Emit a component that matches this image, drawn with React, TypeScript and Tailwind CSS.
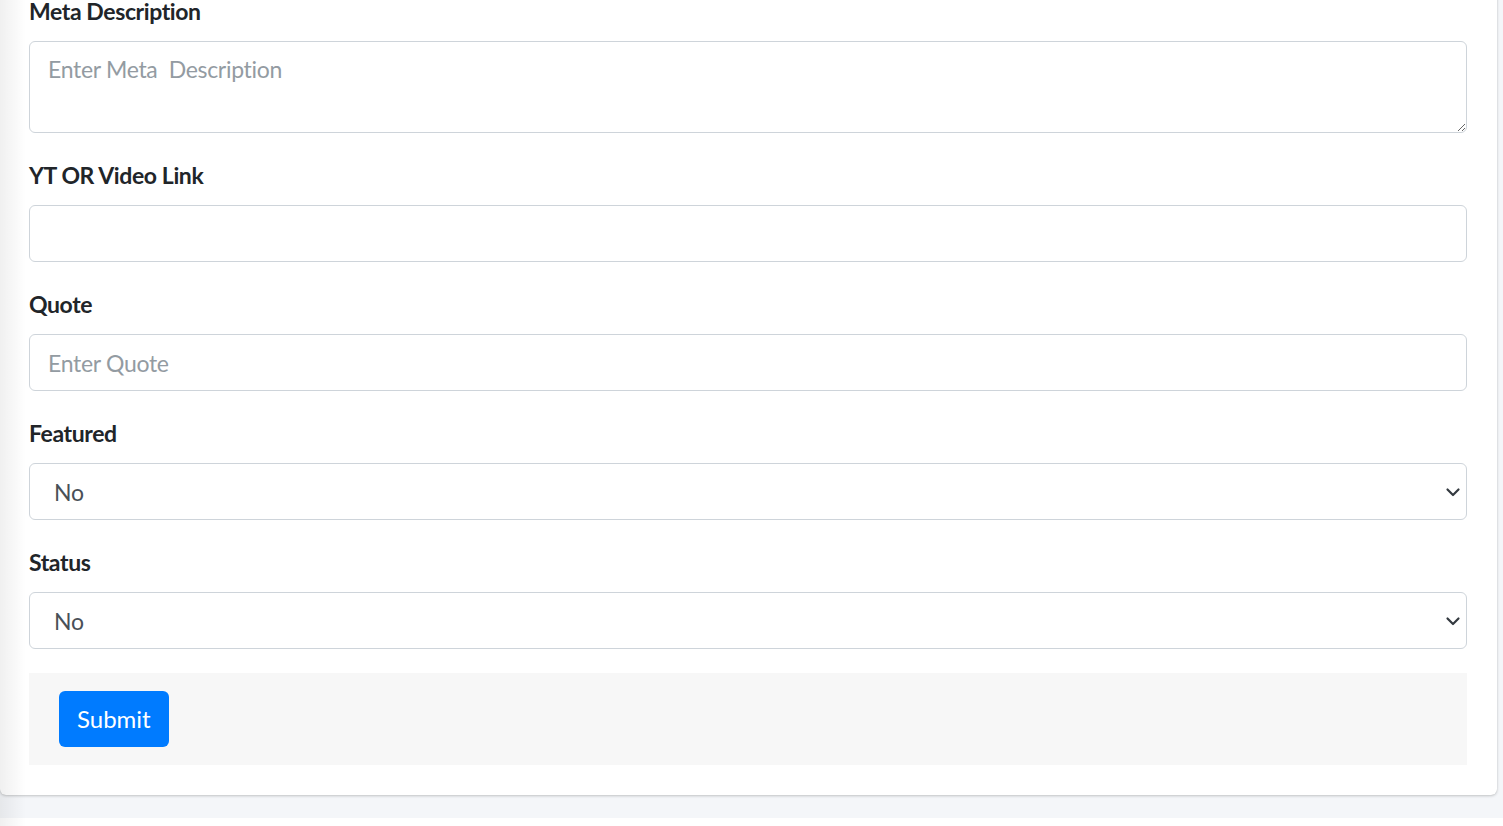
const font = { fontFamily: '"Source Sans Pro", Lato, "Liberation Sans", sans-serif' };

const Label = ({ children }: { children: React.ReactNode }) => (
  <label className="block mb-[12px] text-[23px] tracking-[-0.4px] leading-[36px] font-bold text-[#212529]">{children}</label>
);

const inputCls =
  'block w-full h-[57px] px-[18px] border border-[#ced4da] rounded-[6px] bg-white text-[23px] tracking-[-0.3px] leading-[36px] text-[#495057] placeholder:text-[#939ba2] outline-none';

const Chevron = () => (
  <svg
    className="absolute right-[6px] top-1/2 -translate-y-1/2 w-[16px] h-[16px] pointer-events-none"
    viewBox="0 0 16 16"
    fill="none"
    stroke="#343a40"
    strokeWidth={2.2}
    strokeLinecap="round"
    strokeLinejoin="round"
  >
    <path d="M2.5 5.5l5.5 5.5 5.5-5.5" />
  </svg>
);

const SelectField = ({ label }: { label: string }) => (
  <div className="mb-[24px]">
    <Label>{label}</Label>
    <div className="relative">
      <select className={inputCls + ' appearance-none pl-[24px]'} defaultValue="0">
        <option value="0">No</option>
        <option value="1">Yes</option>
      </select>
      <Chevron />
    </div>
  </div>
);

export default function App() {
  return (
    <div className="relative min-h-[826px] bg-[#f4f6f9] overflow-hidden" style={font}>
      <div className="mr-[6px] mt-[-7px] mb-[23px] bg-white rounded-b-[6px] shadow-[0_0_1px_rgba(0,0,0,0.125),0_1px_3px_rgba(0,0,0,0.2)] pr-[30px] pb-[30px] pl-[29px]">
        <div className="mb-[24px]">
          <Label>Meta Description</Label>
          <textarea
            rows={2}
            placeholder="Enter Meta  Description"
            className="block w-full h-[92px] px-[18px] py-[9px] border border-[#ced4da] rounded-[6px] bg-white text-[23px] tracking-[-0.3px] leading-[36px] text-[#495057] placeholder:text-[#939ba2] outline-none whitespace-pre"
          />
        </div>
        <div className="mb-[24px]">
          <Label>YT OR Video Link</Label>
          <input type="text" className={inputCls} />
        </div>
        <div className="mb-[24px]">
          <Label>Quote</Label>
          <input type="text" placeholder="Enter Quote" className={inputCls} />
        </div>
        <SelectField label="Featured" />
        <SelectField label="Status" />
        <div className="h-[92px] bg-[#f7f7f7] px-[30px] py-[18px]">
          <button className="h-[56px] px-[18px] rounded-[6px] bg-[#007bff] text-white text-[24px] leading-[36px]">
            Submit
          </button>
        </div>
      </div>
      <div className="h-[40px] bg-white" />
      <div className="absolute left-0 top-0 bottom-0 w-[26px] bg-gradient-to-r from-black/[0.06] to-transparent pointer-events-none" />
    </div>
  );
}
